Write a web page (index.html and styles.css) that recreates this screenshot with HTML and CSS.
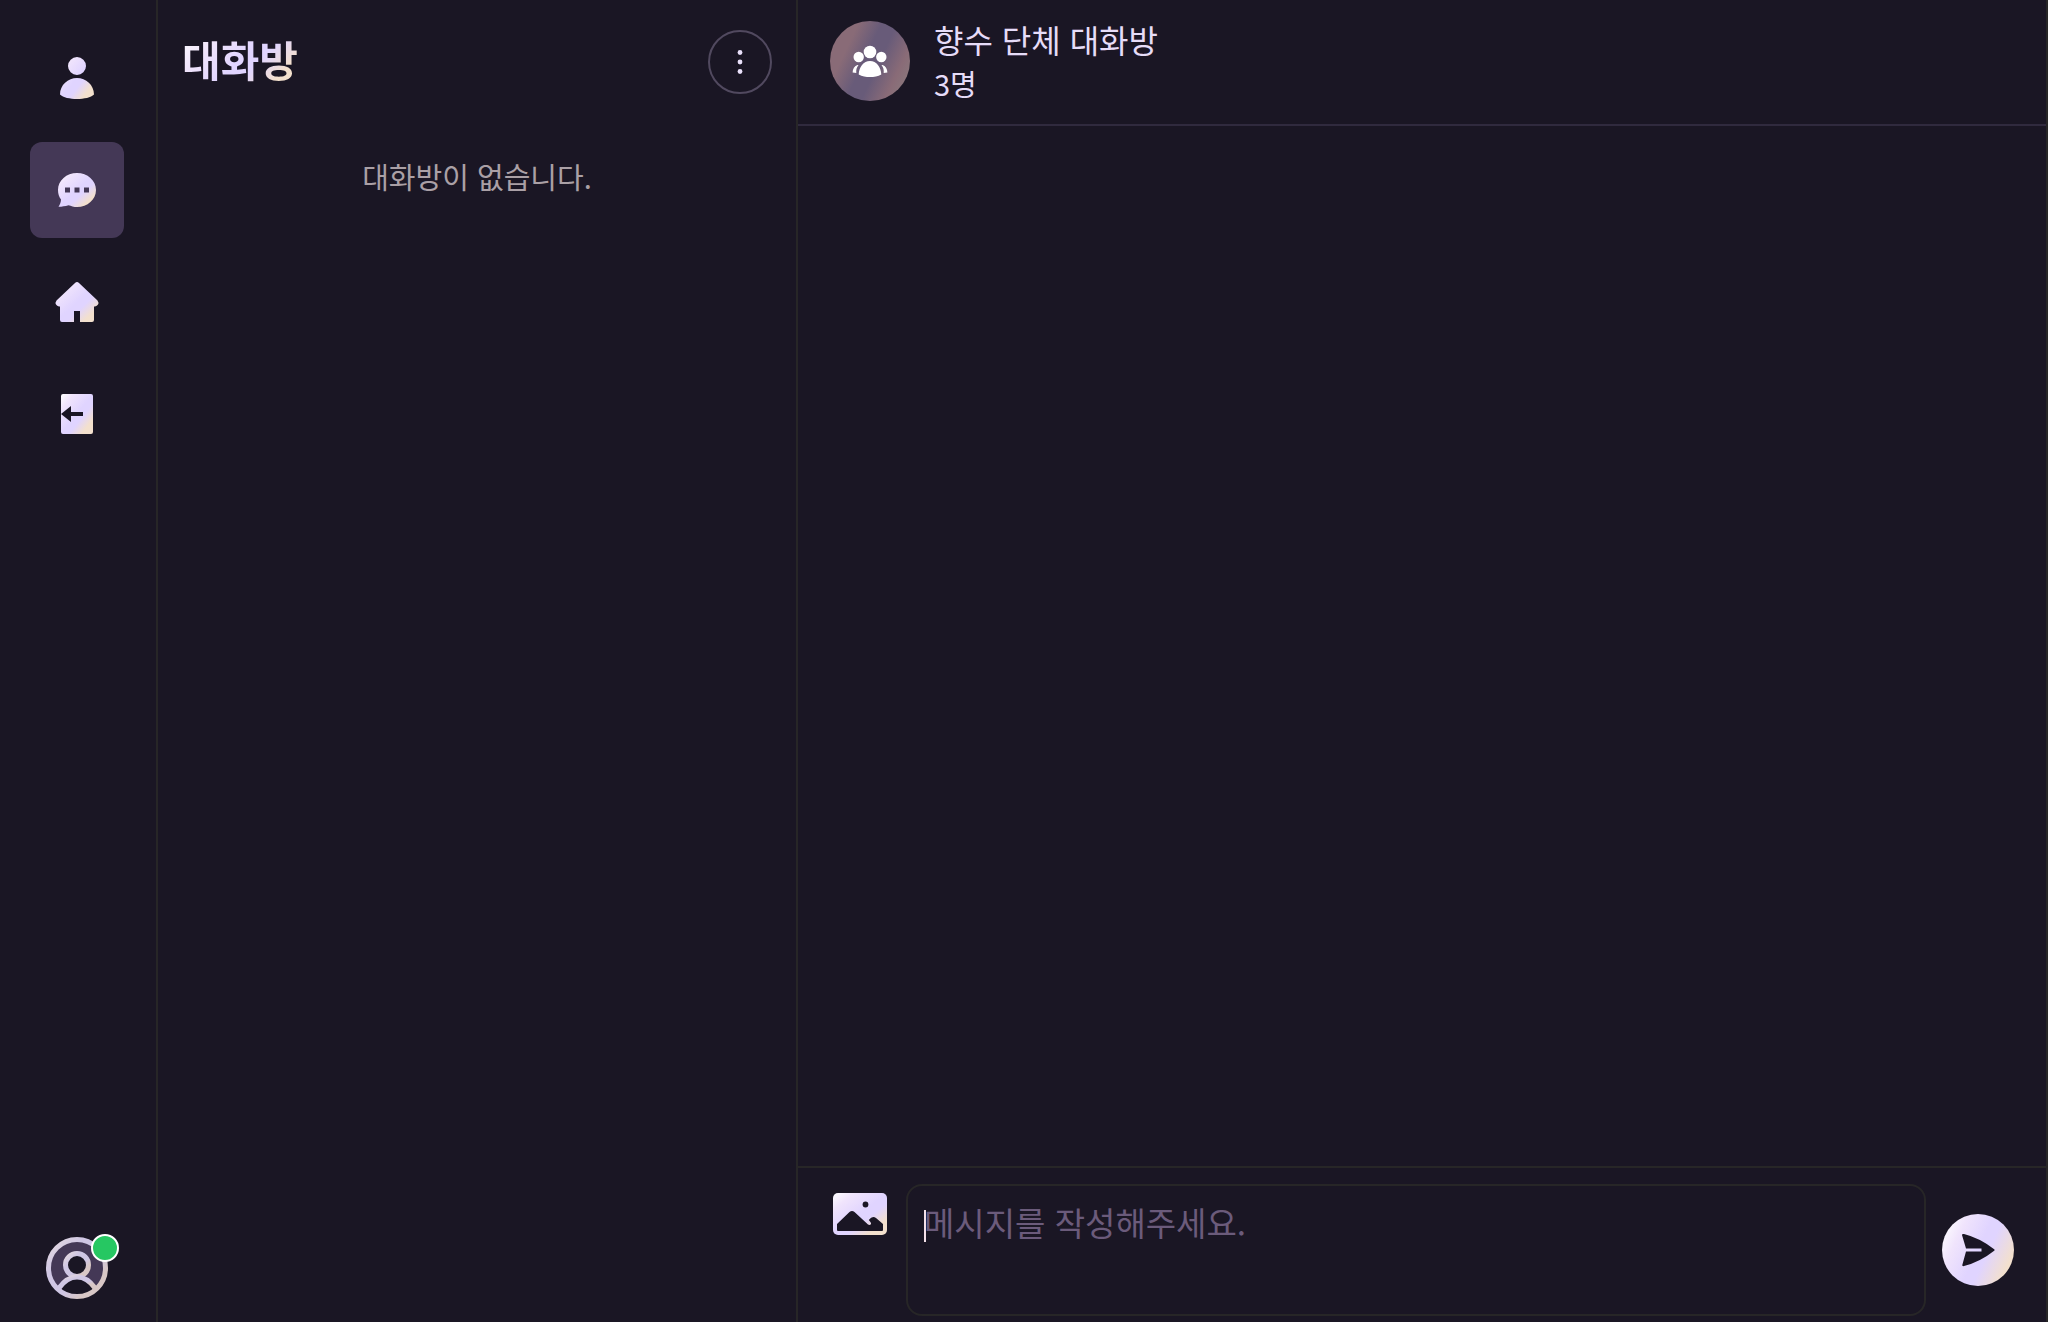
FILE: index.html
```html
<!DOCTYPE html>
<html lang="ko">
<head>
<meta charset="utf-8">
<meta name="viewport" content="width=device-width, initial-scale=1">
<title>대화방</title>
<link rel="stylesheet" href="styles.css">
</head>
<body>
<svg class="defs" aria-hidden="true">
  <defs>
    <linearGradient id="glow" x1="0" y1="0" x2="1" y2="1">
      <stop offset="0" stop-color="#ffffff"/>
      <stop offset="0.2" stop-color="#f0e4fc"/>
      <stop offset="0.5" stop-color="#e0d4ff"/>
      <stop offset="0.62" stop-color="#e0d4ff"/>
      <stop offset="0.82" stop-color="#f3e0cd"/>
      <stop offset="1" stop-color="#f3e0cd"/>
    </linearGradient>
    <linearGradient id="ring" x1="0" y1="0" x2="1" y2="1">
      <stop offset="0" stop-color="#e6dadf"/>
      <stop offset="0.3" stop-color="#cfc6e4"/>
      <stop offset="0.6" stop-color="#cfc6e4"/>
      <stop offset="0.78" stop-color="#d8c7c6"/>
      <stop offset="1" stop-color="#d8c7c6"/>
    </linearGradient>
  </defs>
</svg>
<div class="app">
  <nav class="rail" aria-label="메뉴">
    <div class="rail-menu">
      <a class="rail-link" href="#friends" aria-label="친구">
        <svg class="icon" viewBox="0 0 48 48"><path fill="url(#glow)" d="M24 3a9 9 0 1 1 0 18a9 9 0 0 1 0-18zM24 24C33 24 41 31 41 40.500C38 43.500 31 45 24 45S10 43.500 7 40.500C7 31 15 24 24 24z"/></svg>
      </a>
      <a class="rail-link active" href="#rooms" aria-label="대화방">
        <svg class="icon" viewBox="0 0 48 48"><path fill="url(#glow)" fill-rule="evenodd" d="M24 7C34.500 7 43 14.500 43 24S34.500 41 24 41C21 41 18 40 15.500 39.200C12 40.200 9 40.600 5.500 40.800C7 38.500 8 36 8 33.500C6 31 5 28 5 24C5 14.500 13.500 7 24 7zM12 21.500v5h5v-5zM21.500 21.500v5h5v-5zM31 21.500v5h5v-5z"/></svg>
      </a>
      <a class="rail-link" href="#home" aria-label="홈">
        <svg class="icon" viewBox="0 0 48 48"><path fill="url(#glow)" d="M22 5Q24 3 26 5L44.500 22.500Q46 24.500 45 26.500Q44 28 42 28.500H41V42Q41 44 39 44H27V33H21V44H9Q7 44 7 42V28.500H6Q4 28 3 26.500Q2 24.500 3.500 22.500z"/></svg>
      </a>
      <a class="rail-link" href="#leave" aria-label="나가기">
        <svg class="icon" viewBox="0 0 48 48"><path fill="url(#glow)" fill-rule="evenodd" d="M10 4H38Q40 4 40 6V42Q40 44 38 44H10Q8 44 8 42V6Q8 4 10 4zM8 24L18 32V26H30V22H18V16z"/></svg>
      </a>
    </div>
    <button class="profile" type="button" aria-label="내 프로필">
      <svg class="profile-icon" viewBox="0 0 64 64">
        <circle cx="32" cy="32" r="29" fill="#443856"/>
        <path fill="#1a1624" d="M14 52Q22 41 32 41T50 52Q43 60 32 60T14 52z"/>
        <circle cx="32" cy="29" r="11.500" fill="#1a1624" stroke="url(#ring)" stroke-width="5"/>
        <path fill="none" stroke="url(#ring)" stroke-width="5" d="M14 52Q22 41 32 41T50 52"/>
        <circle cx="32" cy="32" r="28.500" fill="none" stroke="url(#ring)" stroke-width="5"/>
      </svg>
      <span class="status"></span>
    </button>
  </nav>

  <section class="rooms">
    <header class="rooms-head">
      <h1 class="title">대화방</h1>
      <button class="more" type="button" aria-label="더보기">
        <svg class="more-icon" viewBox="0 0 32 32" fill="#e9e0fa"><circle cx="16" cy="6.500" r="2.400"/><circle cx="16" cy="16" r="2.400"/><circle cx="16" cy="25.500" r="2.400"/></svg>
      </button>
    </header>
    <p class="empty">대화방이 없습니다.</p>
  </section>

  <main class="chat">
    <header class="chat-head">
      <span class="avatar">
        <svg class="avatar-icon" viewBox="0 0 40 40" fill="#fff"><circle cx="20" cy="11" r="6.300"/><circle cx="8.700" cy="16" r="5.200"/><circle cx="31.300" cy="16" r="5.200"/><path d="M20 20C26.500 20 31 26 31.300 33.500C28 35.500 24 36 20 36S12 35.500 8.700 33.500C9 26 13.500 20 20 20zM7.500 24C4.500 25 2.600 28 2.600 31.500L6.300 32C6 29 6.500 26.500 8.500 24zM32.500 24C35.500 25 37.400 28 37.400 31.500L33.700 32C34 29 33.500 26.500 31.500 24z"/></svg>
      </span>
      <div class="chat-info">
        <h2 class="chat-name">향수 단체 대화방</h2>
        <p class="chat-count">3명</p>
      </div>
    </header>
    <div class="messages"></div>
    <form class="composer">
      <button class="attach" type="button" aria-label="사진 첨부">
        <svg class="attach-icon" viewBox="0 0 54 42"><rect width="54" height="42" rx="5" fill="url(#glow)"/><circle cx="32.500" cy="11.500" r="2.900" fill="#1a1624"/><path fill="#1a1624" d="M4 31L16.500 19Q19 17 21.500 19L35 31.500Q37 32.500 38 31Q38.500 30 37 28.500L35.800 27Q39.500 22 43 25L50 31V37Q50 38 49 38H5Q4 38 4 37z"/></svg>
      </button>
      <textarea class="message" aria-label="메시지" placeholder="메시지를 작성해주세요."></textarea>
      <button class="send" type="submit" aria-label="보내기">
        <svg class="send-icon" viewBox="0 0 36 36"><path fill="#1a1624" d="M2 3Q2 1.500 4 2Q20 6 34.500 17.500V18.500Q20 30 4 34Q2 34.500 2.300 33L6 19.500H21.500V16.500H6z"/></svg>
      </button>
    </form>
  </main>
</div>
</body>
</html>
```

FILE: styles.css
```css
* {
  box-sizing: border-box;
}

body {
  margin: 0;
  background: #1a1624;
  color: #e6dcf8;
  font-family: "Noto Sans CJK KR", "Noto Sans", sans-serif;
}

h1,
h2,
p {
  margin: 0;
}

button {
  padding: 0;
  border: 0;
  background: none;
  color: inherit;
  cursor: pointer;
}

svg {
  display: block;
}

.defs {
  position: absolute;
  width: 0;
  height: 0;
}

.app {
  display: grid;
  grid-template-columns: 158px 640px 1fr;
  height: 100vh;
  border-right: 2px solid #272627;
}

.rail {
  display: flex;
  flex-direction: column;
  align-items: center;
  justify-content: space-between;
  padding: 30px 32px 22px 30px;
  border-right: 2px solid #272627;
}

.rail-menu {
  display: flex;
  flex-direction: column;
  gap: 16px;
  width: 100%;
}

.rail-link {
  display: grid;
  place-items: center;
  height: 96px;
  border-radius: 12px;
}

.rail-link.active {
  background: #443856;
}

.icon {
  width: 48px;
  height: 48px;
}

.profile {
  position: relative;
}

.profile-icon {
  width: 64px;
  height: 64px;
}

.status {
  position: absolute;
  top: -2px;
  right: -10px;
  width: 28px;
  height: 28px;
  border: 2px solid #fff;
  border-radius: 50%;
  background: #26c762;
}

.rooms {
  border-right: 2px solid #272627;
}

.rooms-head {
  display: flex;
  align-items: center;
  justify-content: space-between;
  height: 124px;
  padding: 0 24px;
}

.title {
  padding-bottom: 6px;
  background: linear-gradient(135deg, #fff 0%, #f0e4fc 25%, #e0d4ff 50%, #e0d4ff 60%, #f3e0cd 80%);
  background-clip: text;
  color: transparent;
  font-size: 42px;
  font-weight: 700;
  line-height: 56px;
}

.more {
  display: grid;
  place-items: center;
  width: 64px;
  height: 64px;
  border: 2px solid #51495f;
  border-radius: 50%;
}

.more-icon {
  width: 32px;
  height: 32px;
}

.empty {
  padding-top: 32px;
  color: #aaa0a6;
  font-size: 29px;
  line-height: 40px;
  text-align: center;
}

.chat {
  display: flex;
  flex-direction: column;
  min-width: 0;
}

.chat-head {
  display: flex;
  align-items: center;
  gap: 24px;
  height: 126px;
  padding: 0 32px 2px;
  border-bottom: 2px solid #302a3e;
}

.avatar {
  display: grid;
  place-items: center;
  width: 80px;
  height: 80px;
  border-radius: 50%;
  background: linear-gradient(115deg, #896b77 25%, #685b79 45%, #685b79 58%, #896b77 78%, #8b8080 100%);
}

.avatar-icon {
  width: 40px;
  height: 40px;
}

.chat-name {
  font-size: 32px;
  font-weight: 400;
  line-height: 44px;
}

.chat-count {
  font-size: 29px;
  line-height: 44px;
}

.messages {
  flex: 1;
}

.composer {
  display: flex;
  align-items: center;
  padding: 16px 32px 6px;
  border-top: 2px solid #272627;
}

.attach {
  align-self: flex-start;
  margin: 9px 19px 0 3px;
}

.attach-icon {
  width: 54px;
  height: 42px;
}

.message {
  flex: 1;
  min-width: 0;
  height: 132px;
  padding: 14px 16px;
  border: 2px solid #272627;
  border-radius: 16px;
  outline: 0;
  background: transparent;
  color: #e6dcf8;
  caret-color: #f3e0e8;
  font: inherit;
  font-size: 33px;
  line-height: 44px;
  resize: none;
}

/* insertion bar shown while the box is empty */
.message:placeholder-shown {
  background: linear-gradient(#f3e0e8, #f3e0e8) 16px 24px / 2px 32px no-repeat;
  caret-color: transparent;
}

.message::placeholder {
  color: #6b5b7b;
}

.send {
  display: grid;
  place-items: center;
  width: 72px;
  height: 72px;
  margin-left: 16px;
  border-radius: 50%;
  background: linear-gradient(115deg, #fff 5%, #f0e4fc 25%, #e0d4ff 50%, #e0d4ff 60%, #f3e0cd 85%);
}

.send-icon {
  width: 36px;
  height: 36px;
}
```
